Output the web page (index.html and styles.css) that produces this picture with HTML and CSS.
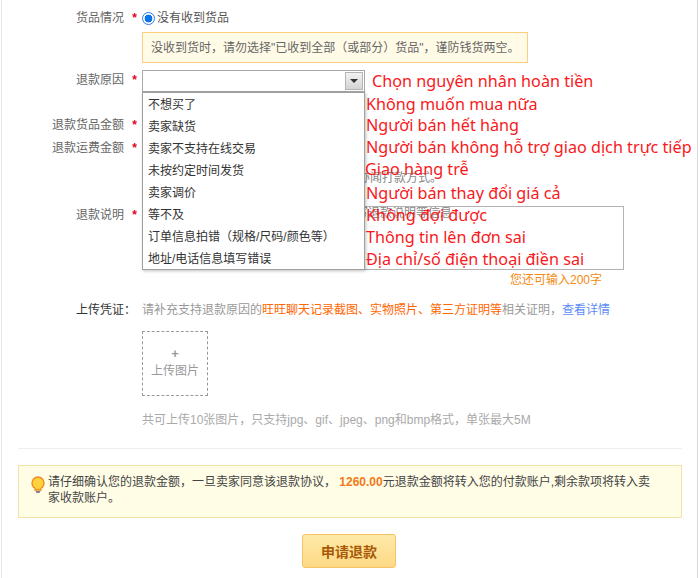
FILE: index.html
```html
<!DOCTYPE html>
<html lang="zh">
<head>
<meta charset="utf-8">
<title>申请退款</title>
<link rel="stylesheet" href="styles.css">
</head>
<body>
<div class="page">
  <div class="row row-goods">
    <div class="label">货品情况</div><div class="star">*</div>
    <div class="field radio-field"><span class="radio"></span><span>没有收到货品</span></div>
  </div>
  <div class="notice">没收到货时，请勿选择"已收到全部（或部分）货品"，谨防钱货两空。</div>
  <div class="row row-reason">
    <div class="label">退款原因</div><div class="star">*</div>
    <div class="field">
      <div class="select"><span class="select-btn"><span class="caret"></span></span></div>
    </div>
  </div>
  <div class="row row-amount">
    <div class="label">退款货品金额</div><div class="star">*</div>
  </div>
  <div class="row row-freight">
    <div class="label">退款运费金额</div><div class="star">*</div>
  </div>
  <div class="row row-payway">
    <div class="field hidden-note">选择协商一致的线下或其他协商办闻打款方式。</div>
  </div>
  <div class="row row-desc">
    <div class="label">退款说明</div><div class="star">*</div>
    <div class="field">
      <div class="textarea">请填写退款说明等信息</div>
      <div class="counter">您还可输入200字</div>
    </div>
  </div>
  <div class="row row-upload">
    <div class="label label-dark">上传凭证：</div>
    <div class="field">
      <div class="upload-tip">请补充支持退款原因的<span class="hot">旺旺聊天记录截图、实物照片、第三方证明等</span>相关证明，<span class="link">查看详情</span></div>
      <div class="upload-box"><span class="plus">+</span><span>上传图片</span></div>
      <div class="upload-hint">共可上传10张图片，只支持jpg、gif、jpeg、png和bmp格式，单张最大5M</div>
    </div>
  </div>
  <div class="divider"></div>
  <div class="tip">
    <svg class="bulb" width="14" height="18" viewBox="0 0 14 18"><path d="M7 1a6 6 0 0 0-6 6c0 2.600 1.500 4.300 3 5.300V14h6v-1.700c1.500-1 3-2.700 3-5.300a6 6 0 0 0-6-6z" fill="#fcd13b" stroke="#f08a1d" stroke-width="1.300"/><path d="M4.500 15h5l-1 2h-3z" fill="#8a7f8c"/></svg>
    <p class="tip-text">请仔细确认您的退款金额，一旦卖家同意该退款协议， <b class="money">1260.00</b>元退款金额将转入您的付款账户,剩余款项将转入卖家收款账户。</p>
  </div>
  <div class="actions"><button class="submit" type="button">申请退款</button></div>

  <ul class="dropdown">
    <li>不想买了</li>
    <li>卖家缺货</li>
    <li>卖家不支持在线交易</li>
    <li>未按约定时间发货</li>
    <li>卖家调价</li>
    <li>等不及</li>
    <li>订单信息拍错（规格/尺码/颜色等）</li>
    <li>地址/电话信息填写错误</li>
  </ul>

  <div class="note n1">Chọn nguyên nhân hoàn tiền</div>
  <div class="note n2">Không muốn mua nữa</div>
  <div class="note n3">Người bán hết hàng</div>
  <div class="note n4">Người bán không hỗ trợ giao dịch trực tiếp</div>
  <div class="note n5">Giao hàng trễ</div>
  <div class="note n6">Người bán thay đổi giá cả</div>
  <div class="note n7">Không đợi được</div>
  <div class="note n8">Thông tin lên đơn sai</div>
  <div class="note n9">Địa chỉ/số điện thoại điền sai</div>
</div>
</body>
</html>
```
FILE: styles.css
```css
* { box-sizing: border-box; }
html, body { margin: 0; padding: 0; background: #fff; }
body { font-family: "Liberation Sans", "Noto Sans CJK SC", sans-serif; font-size: 12px; color: #666; }
.page {
  position: relative;
  width: 697px;
  height: 578px;
  margin-left: 1px;
  overflow: hidden;
  border-left: 1px solid #dfe6ee;
  border-right: 1px solid #d8d8d8;
}
.row { display: flex; align-items: flex-start; }
.label { width: 122px; margin-top: 1px; text-align: right; line-height: 18px; flex: none; }
.label-dark { color: #333; width: 134px; margin-right: 6px; }
.star { width: 18px; margin-top: 1px; flex: none; color: #e4002b; text-align: center; line-height: 18px; font-weight: bold; padding-left: 3px; }
.field { flex: none; }
.row-goods { padding-top: 8px; height: 32px; }
.radio-field { display: flex; align-items: center; gap: 2px; margin-top: 1px; line-height: 18px; color: #555; }
.radio { width: 13px; height: 13px; border-radius: 50%; border: 1px solid #2a7de1; background: radial-gradient(circle, #0a75e8 0 3.600px, #fff 4.200px); }
.notice {
  margin-left: 140px;
  width: 386px;
  height: 31px;
  padding-left: 8px;
  line-height: 31px;
  background: #fffbe6;
  border: 1px solid #fbcf7e;
  color: #666;
  white-space: nowrap;
}
.row-reason { margin-top: 7px; height: 22px; }
.select { width: 223px; height: 22px; border: 1px solid #a9a9a9; background: #fff; display: flex; justify-content: flex-end; padding: 1px; }
.select-btn { width: 18px; height: 18px; border: 1px solid #b5b5b5; background: linear-gradient(#f2f2f2, #d4d4d4); display: flex; align-items: center; justify-content: center; }
.caret { width: 0; height: 0; border-left: 4px solid transparent; border-right: 4px solid transparent; border-top: 4px solid #333; }
.row-amount { margin-top: 23px; height: 23px; }
.row-freight { height: 18px; }
.row-payway { margin-left: 140px; margin-top: 13px; height: 20px; }
.hidden-note { width: 300px; text-align: right; line-height: 18px; color: #888; white-space: nowrap; }
.row-desc { margin-top: 16px; height: 92px; }
.row-desc .field { padding-top: 1px; }
.textarea { width: 482px; height: 64px; border: 1px solid #b2b2b2; padding: 0 4px; color: #888; line-height: 12px; text-indent: 185px; white-space: nowrap; overflow: hidden; }
.counter { width: 460px; text-align: right; color: #f48a12; line-height: 18px; margin-top: 1px; }
.row-upload { margin-top: 3px; }
.upload-tip { color: #999; margin-top: 1px; line-height: 18px; white-space: nowrap; }
.hot { color: #ff6600; }
.link { color: #5c8cf5; }
.upload-box {
  width: 66px; height: 65px; margin-top: 12px;
  padding-bottom: 2px;
  border: 1px dashed #999;
  color: #999;
  display: flex; flex-direction: column; align-items: center; justify-content: center;
  line-height: 18px;
}
.plus { font-size: 13px; font-weight: bold; line-height: 16px; }
.upload-hint { color: #aaa; line-height: 18px; margin-top: 15px; white-space: nowrap; }
.divider { height: 1px; background: #eee; margin: 19px 15px 0 16px; }
.tip {
  margin: 16px 0 0 16px;
  width: 664px; height: 53px;
  background: #fffde6;
  border: 1px solid #f0e3a8;
  display: flex; align-items: flex-start;
  padding: 8px 28px 0 12px;
  gap: 3px;
}
.bulb { flex: none; margin-top: 2px; }
.tip-text { margin: 0; color: #444; line-height: 16px; }
.money { color: #f07a1a; }
.actions { margin: 16px 0 0 300px; }
.submit {
  width: 94px; height: 34px;
  border: 1px solid #f5c363;
  border-radius: 3px;
  background: linear-gradient(#fee9a9, #fdd985);
  color: #a85a06;
  font: bold 14px "Noto Sans CJK SC", sans-serif;
  padding: 0;
}
.dropdown {
  position: absolute;
  left: 140px; top: 92px;
  width: 223px; height: 178px;
  margin: 0; padding: 0;
  list-style: none;
  background: #fff;
  border: 1px solid #a0a0a0;
  box-shadow: 1px 1px 3px rgba(0,0,0,.25);
  color: #333;
}
.dropdown li { height: 22px; line-height: 24px; padding-left: 5px; white-space: nowrap; }
.note {
  position: absolute;
  font-family: "Noto Sans", "Open Sans", sans-serif;
  font-size: 16.2px;
  line-height: 22px;
  color: #f8191c;
  white-space: nowrap;
}
.n1 { left: 370px; top: 70px; }
.n2 { left: 364px; top: 93px; }
.n3 { left: 364px; top: 114px; }
.n4 { left: 364px; top: 136px; }
.n5 { left: 363px; top: 158px; }
.n6 { left: 364px; top: 182px; }
.n7 { left: 364px; top: 204px; }
.n8 { left: 364px; top: 226px; }
.n9 { left: 364px; top: 248px; }
```
